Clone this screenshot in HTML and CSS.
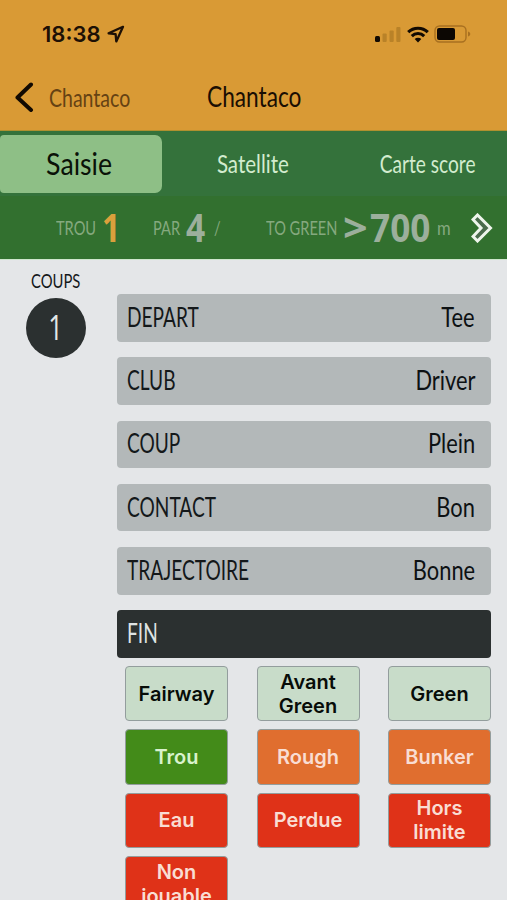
FILE: index.html
```
<!DOCTYPE html>
<html lang="fr">
<head>
  <meta charset="UTF-8">
  <title>Chantaco</title>
  <link rel="stylesheet" href="styles.css">
</head>
<body>

  <header>
    <div class="status">
      <span class="time">18:38</span>
      <svg class="location" width="18" height="18" viewBox="0 0 18 18"><path d="M16 1.800 1.600 8.300l7 .9.700 7.200z" fill="none" stroke="#1d1005" stroke-width="2.300" stroke-linejoin="round"/></svg>
      <svg class="signal" width="26" height="17" viewBox="0 0 26 17">
        <rect x="0" y="10" width="5" height="6" rx="1.500" fill="#120a02"/>
        <rect x="7.500" y="7.500" width="4.200" height="8.500" rx="1" fill="#b98228"/>
        <rect x="14.500" y="4.500" width="4.200" height="11.500" rx="1" fill="#b98228"/>
        <rect x="21.300" y="1" width="4.200" height="15" rx="1" fill="#b98228"/>
      </svg>
      <svg class="wifi" width="22" height="17" viewBox="0 0 22 17" fill="none" stroke="#120a02" stroke-width="3.100">
        <path d="M1.200 6.200a14 14 0 0 1 19.600 0M4.800 10.100a8.800 8.800 0 0 1 12.400 0"/>
        <path d="M11 16.500 7.700 13.100a4.700 4.700 0 0 1 6.600 0z" fill="#120a02" stroke="none"/>
      </svg>
      <svg class="battery" width="37" height="18" viewBox="0 0 37 18">
        <rect x="1" y="1" width="31" height="16" rx="4.500" fill="none" stroke="#a87020" stroke-width="1.400"/>
        <rect x="3" y="3" width="18" height="12" rx="2" fill="#0c0703"/>
        <path d="M34 6.500c3 1 3 4 0 5z" fill="#a87020"/>
      </svg>
    </div>
    <div class="nav">
      <svg class="back" width="19" height="30" viewBox="0 0 19 30"><path d="M16 2.500 2.500 15.500 16 28" fill="none" stroke="#120a02" stroke-width="4" stroke-linecap="round" stroke-linejoin="round"/></svg>
      <span class="narrow back-label">Chantaco</span>
      <span class="narrow title">Chantaco</span>
    </div>
  </header>

  <div class="tabs">
    <div class="tab active"><span class="narrow">Saisie</span></div>
    <div class="tab"><span class="narrow">Satellite</span></div>
    <div class="tab last"><span class="narrow">Carte score</span></div>
  </div>

  <div class="hole">
    <span class="narrow label trou">TROU</span>
    <span class="narrow number current">1</span>
    <span class="narrow label par">PAR</span>
    <span class="narrow number four">4</span>
    <span class="narrow label slash">/</span>
    <span class="narrow label to-green">TO GREEN</span>
    <span class="narrow number more">&gt;</span>
    <span class="narrow number distance">700</span>
    <span class="narrow label unit">m</span>
    <svg class="next" width="22" height="30" viewBox="0 0 22 30"><path d="M2 6.500 6.500 2 19.500 15 6.500 28 2 23.500 10 15z" fill="#4a6b4c" stroke="#eef5ec" stroke-width="3"/></svg>
  </div>

  <main>
    <div class="shots">
      <span class="narrow shots-label">COUPS</span>
      <div class="circle"><span class="narrow">1</span></div>
    </div>
    <div class="form">
      <div class="row"><span class="narrow key">DEPART</span><span class="narrow value">Tee</span></div>
      <div class="row"><span class="narrow key">CLUB</span><span class="narrow value">Driver</span></div>
      <div class="row"><span class="narrow key">COUP</span><span class="narrow value">Plein</span></div>
      <div class="row"><span class="narrow key">CONTACT</span><span class="narrow value">Bon</span></div>
      <div class="row"><span class="narrow key">TRAJECTOIRE</span><span class="narrow value">Bonne</span></div>
      <div class="row dark"><span class="narrow key">FIN</span></div>
      <div class="choices">
        <button class="light">Fairway</button>
        <button class="light">Avant<br>Green</button>
        <button class="light">Green</button>
        <button class="green">Trou</button>
        <button class="orange">Rough</button>
        <button class="orange">Bunker</button>
        <button class="red">Eau</button>
        <button class="red">Perdue</button>
        <button class="red">Hors<br>limite</button>
        <button class="red">Non<br>jouable</button>
      </div>
    </div>
  </main>

</body>
</html>
```
FILE: styles.css
```
* {
  box-sizing: border-box;
}
body {
  margin: 0;
  height: 900px;
  overflow: hidden;
  background: #e4e6e8;
  font-family: Lato, sans-serif;
  color: #14181a;
}
svg {
  flex: none;
  display: block;
}
/* condensed lettering */
.narrow {
  display: inline-block;
  white-space: nowrap;
  transform: scaleX(0.76);
  transform-origin: left center;
}
header {
  height: 131px;
  background: #d99a35;
  border-bottom: 1px solid #b0902f;
}
.status {
  display: flex;
  height: 68px;
  align-items: center;
  padding-left: 42px;
}
.time {
  width: 65px;
  font: 600 22px/30px Inter, sans-serif;
  color: #1d1005;
}
.signal {
  margin-left: 250px;
}
.wifi {
  margin-left: 6px;
}
.battery {
  margin-left: 5px;
}
.nav {
  display: flex;
  height: 57px;
  align-items: center;
  padding-left: 15px;
}
.back-label {
  width: 158px;
  margin-left: 15px;
  font-size: 25px;
  color: #654213;
  transform: scaleX(0.78);
}
.title {
  margin-bottom: 2px;
  font-size: 28px;
  color: #1a0e03;
  transform: scaleX(0.81);
}
.tabs {
  display: flex;
  height: 65px;
  padding: 4px 0 3px;
  background: #34723b;
}
.tab {
  flex: 0 0 181px;
  display: flex;
  align-items: center;
  justify-content: center;
  padding-bottom: 2px;
  font-size: 25px;
  color: #d3eccf;
}
.tab .narrow {
  transform: scaleX(0.82);
  transform-origin: center;
}
.active {
  flex-basis: 162px;
  padding-right: 4px;
  border-radius: 4px 7px 7px 4px;
  background: #8ebf86;
  font-size: 30px;
  color: #0a1208;
}
.active .narrow {
  transform: scaleX(0.89);
}
.last {
  flex-basis: 164px;
  padding-left: 6px;
}
.last .narrow {
  transform: scaleX(0.765);
}
.hole {
  display: flex;
  height: 64px;
  align-items: center;
  padding: 0 0 2px 56px;
  background: #32702f;
  border-bottom: 1px solid #cfe6cd;
}
.label {
  flex: none;
  font-size: 20px;
  color: #85a97f;
  transform: scaleX(0.73);
}
.number {
  flex: none;
  font: 700 40px/60px "Open Sans", sans-serif;
  color: #9caf9c;
}
.trou {
  width: 46px;
}
.current {
  width: 51px;
  color: #dba03c;
  transform: scaleX(0.8);
}
.par {
  width: 33px;
}
.four {
  width: 28px;
  transform: scaleX(0.84);
}
.slash {
  width: 52px;
}
.to-green {
  width: 77px;
}
.more {
  width: 27px;
  transform: scaleX(1.08);
}
.distance {
  width: 67px;
  transform: scaleX(0.88);
}
.unit {
  width: 34px;
  transform: scaleX(0.83);
}
.next {
  margin-top: 2px;
}
main {
  display: flex;
}
.shots {
  width: 117px;
  padding: 8px 0 0 26px;
}
.shots-label {
  margin-left: 5px;
  font-size: 20px;
  line-height: 24px;
  transform: scaleX(0.74);
}
.circle {
  display: flex;
  width: 60px;
  height: 60px;
  margin-top: 6px;
  align-items: center;
  justify-content: center;
  border-radius: 50%;
  background: #2b3030;
  font: 34px/60px "Open Sans", sans-serif;
  color: #e4e8e8;
}
.circle .narrow {
  margin-bottom: 3px;
  transform-origin: center;
}
.form {
  width: 374px;
  padding-top: 34px;
}
.row {
  display: flex;
  height: 47.500px;
  margin-bottom: 15.800px;
  padding: 0 16px 2px 10px;
  align-items: center;
  justify-content: space-between;
  border-radius: 4px;
  background: #b3b8b9;
  font-size: 26px;
}
.key {
  transform: scaleX(0.735);
}
.value {
  transform: scaleX(0.84);
  transform-origin: right center;
  color: #0d1113;
}
.dark {
  margin-bottom: 8px;
  background: #2b3030;
  color: #dfe3e3;
}
.choices {
  display: grid;
  grid-template-columns: repeat(3, 103px);
  grid-auto-rows: 55.300px;
  gap: 8px 28.500px;
  padding-left: 8px;
}
button {
  padding: 0;
  border: 1.500px solid #939d9d;
  border-radius: 4px;
  font: 600 20px/24px Inter, sans-serif;
  color: #f9ddd3;
}
.light {
  background: #c8dcc9;
  color: #070c08;
}
.green {
  background: #438b19;
  color: #d9f2cd;
}
.orange {
  background: #e06e2f;
}
.red {
  background: #df3218;
}
```
